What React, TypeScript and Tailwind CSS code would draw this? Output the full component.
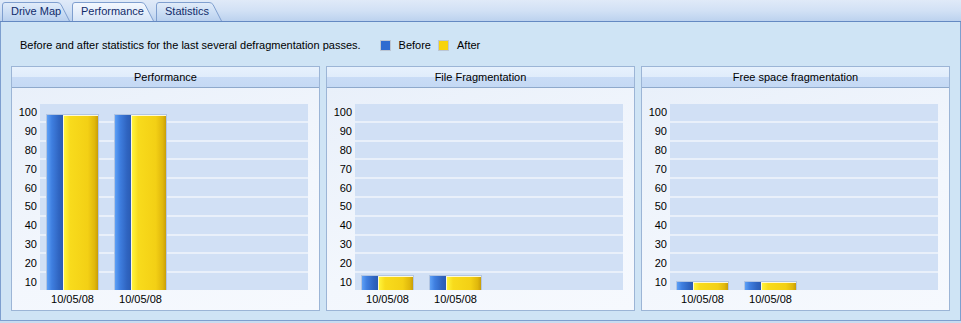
import React from "react";

const tabs = [
  { label: "Drive Map", w: 68, sel: false },
  { label: "Performance", w: 82, sel: true },
  { label: "Statistics", w: 66, sel: false },
];

function Tab({ label, w, sel }: { label: string; w: number; sel: boolean }) {
  const H = 19;
  const id = "g" + label.replace(/\s/g, "");
  return (
    <div className="relative h-[19px] shrink-0" style={{ width: w }}>
      <svg className="absolute inset-0" width={w} height={H} viewBox={`0 0 ${w} ${H}`}>
        <defs>
          <linearGradient id={id} x1="0" y1="0" x2="0" y2="1">
            <stop offset="0" stopColor={sel ? "#f4f8fe" : "#e2ecf9"} />
            <stop offset="0.5" stopColor={sel ? "#e6effb" : "#cddff5"} />
            <stop offset="1" stopColor={sel ? "#d6e5f7" : "#b9d0ee"} />
          </linearGradient>
        </defs>
        <path
          d={`M0.5,${H} V3 Q0.5,0.5 3,0.5 H${w - 13} Q${w - 10.5},0.5 ${w - 9},2.5 L${w - 0.5},${H}`}
          fill={`url(#${id})`}
          stroke="#7f9fcf"
          strokeWidth="1"
        />
      </svg>
      <span className="relative block pl-[9px] pt-[2px] leading-[15px] text-[#112c6b]">{label}</span>
    </div>
  );
}

function BarGroup({ h }: { h: number }) {
  return (
    <div
      className="w-[53px] shrink-0 flex border border-b-0 border-[#b2c5e2] bg-[#b7cbe8]"
      style={{ height: h }}
    >
      <div className="w-[16px] h-full bg-[linear-gradient(to_right,#5da0f6,#3f7fe0_30%,#2f64c0_75%,#2b5cb3)]" />
      <div className="flex-1 h-full border-l border-t border-[#fff9d6] bg-[linear-gradient(to_right,#fff43c,#f8db1c_18%,#f3d015_70%,#e0b80c_90%,#c99e08)]" />
    </div>
  );
}

function Panel({ title, heights }: { title: string; heights: number[] }) {
  const labels = [100, 90, 80, 70, 60, 50, 40, 30, 20, 10];
  return (
    <div className="w-[309px] h-[245px] border border-[#9cb5d6] flex flex-col">
      <div className="h-[21px] shrink-0 border-b border-[#8ea9cc] bg-[linear-gradient(to_bottom,#e7f1fd_0%,#e0ecfb_50%,#c9dcf6_52%,#c4d9f4_100%)] flex items-center justify-center leading-[14px] text-black">
        {title}
      </div>
      <div className="flex-1 bg-[linear-gradient(160deg,#e9f0fa,#f3f7fd_60%,#f6f9fe)] pt-[16px]">
        <div className="flex">
          <div className="w-[28px] h-[186px] shrink-0 flex flex-col gap-[2px] pr-[3px]">
            {labels.map((l) => (
              <div key={l} className="flex-1 flex items-center justify-end leading-[12px] text-black">
                {l}
              </div>
            ))}
          </div>
          <div className="relative w-[268px] h-[186px]">
            <div className="absolute inset-0 flex flex-col gap-[2px] bg-[#e9f0fa]">
              {labels.map((l) => (
                <div key={l} className="flex-1 bg-[#d1e0f5]" />
              ))}
            </div>
            <div className="relative h-full flex items-end gap-[15px] pl-[6px]">
              {heights.map((h, i) => (
                <BarGroup key={i} h={h} />
              ))}
            </div>
          </div>
        </div>
        <div className="flex gap-[15px] pl-[34px] mt-[2px]">
          {heights.map((_, i) => (
            <div key={i} className="w-[53px] text-center leading-[14px] text-black">
              10/05/08
            </div>
          ))}
        </div>
      </div>
    </div>
  );
}

export default function App() {
  return (
    <div className="w-[961px] h-[323px] bg-[#c8dcf1] flex flex-col text-[11px] font-['Liberation_Sans',Arial,sans-serif]">
      <div className="h-[21px] shrink-0 flex items-end gap-[2px] pl-[2px] bg-[linear-gradient(to_bottom,#e0eaf8,#d2e1f5_50%,#bcd2ee)]">
        {tabs.map((t) => (
          <Tab key={t.label} {...t} />
        ))}
      </div>
      <div className="h-px shrink-0 bg-[#6489c2]" />
      <div className="h-[299px] shrink-0 border-x border-b border-[#7d9fcf] bg-[#cfe4f5] flex flex-col px-[10px]">
        <div className="h-[44px] shrink-0 flex items-start pt-[16px] pl-[9px] leading-[14px] text-black">
          <span>Before and after statistics for the last several defragmentation passes.</span>
          <span className="ml-[19px] mt-[2px] w-[11px] h-[11px] border border-[#bcc6d4] bg-[#2f6bd0]" />
          <span className="ml-[8px]">Before</span>
          <span className="ml-[7px] mt-[2px] w-[11px] h-[11px] border border-[#bcc6d4] bg-[#f7d30c]" />
          <span className="ml-[8px]">After</span>
        </div>
        <div className="flex gap-[6px]">
          <Panel title="Performance" heights={[176, 176]} />
          <Panel title="File Fragmentation" heights={[15, 15]} />
          <Panel title="Free space fragmentation" heights={[9, 9]} />
        </div>
      </div>
    </div>
  );
}
